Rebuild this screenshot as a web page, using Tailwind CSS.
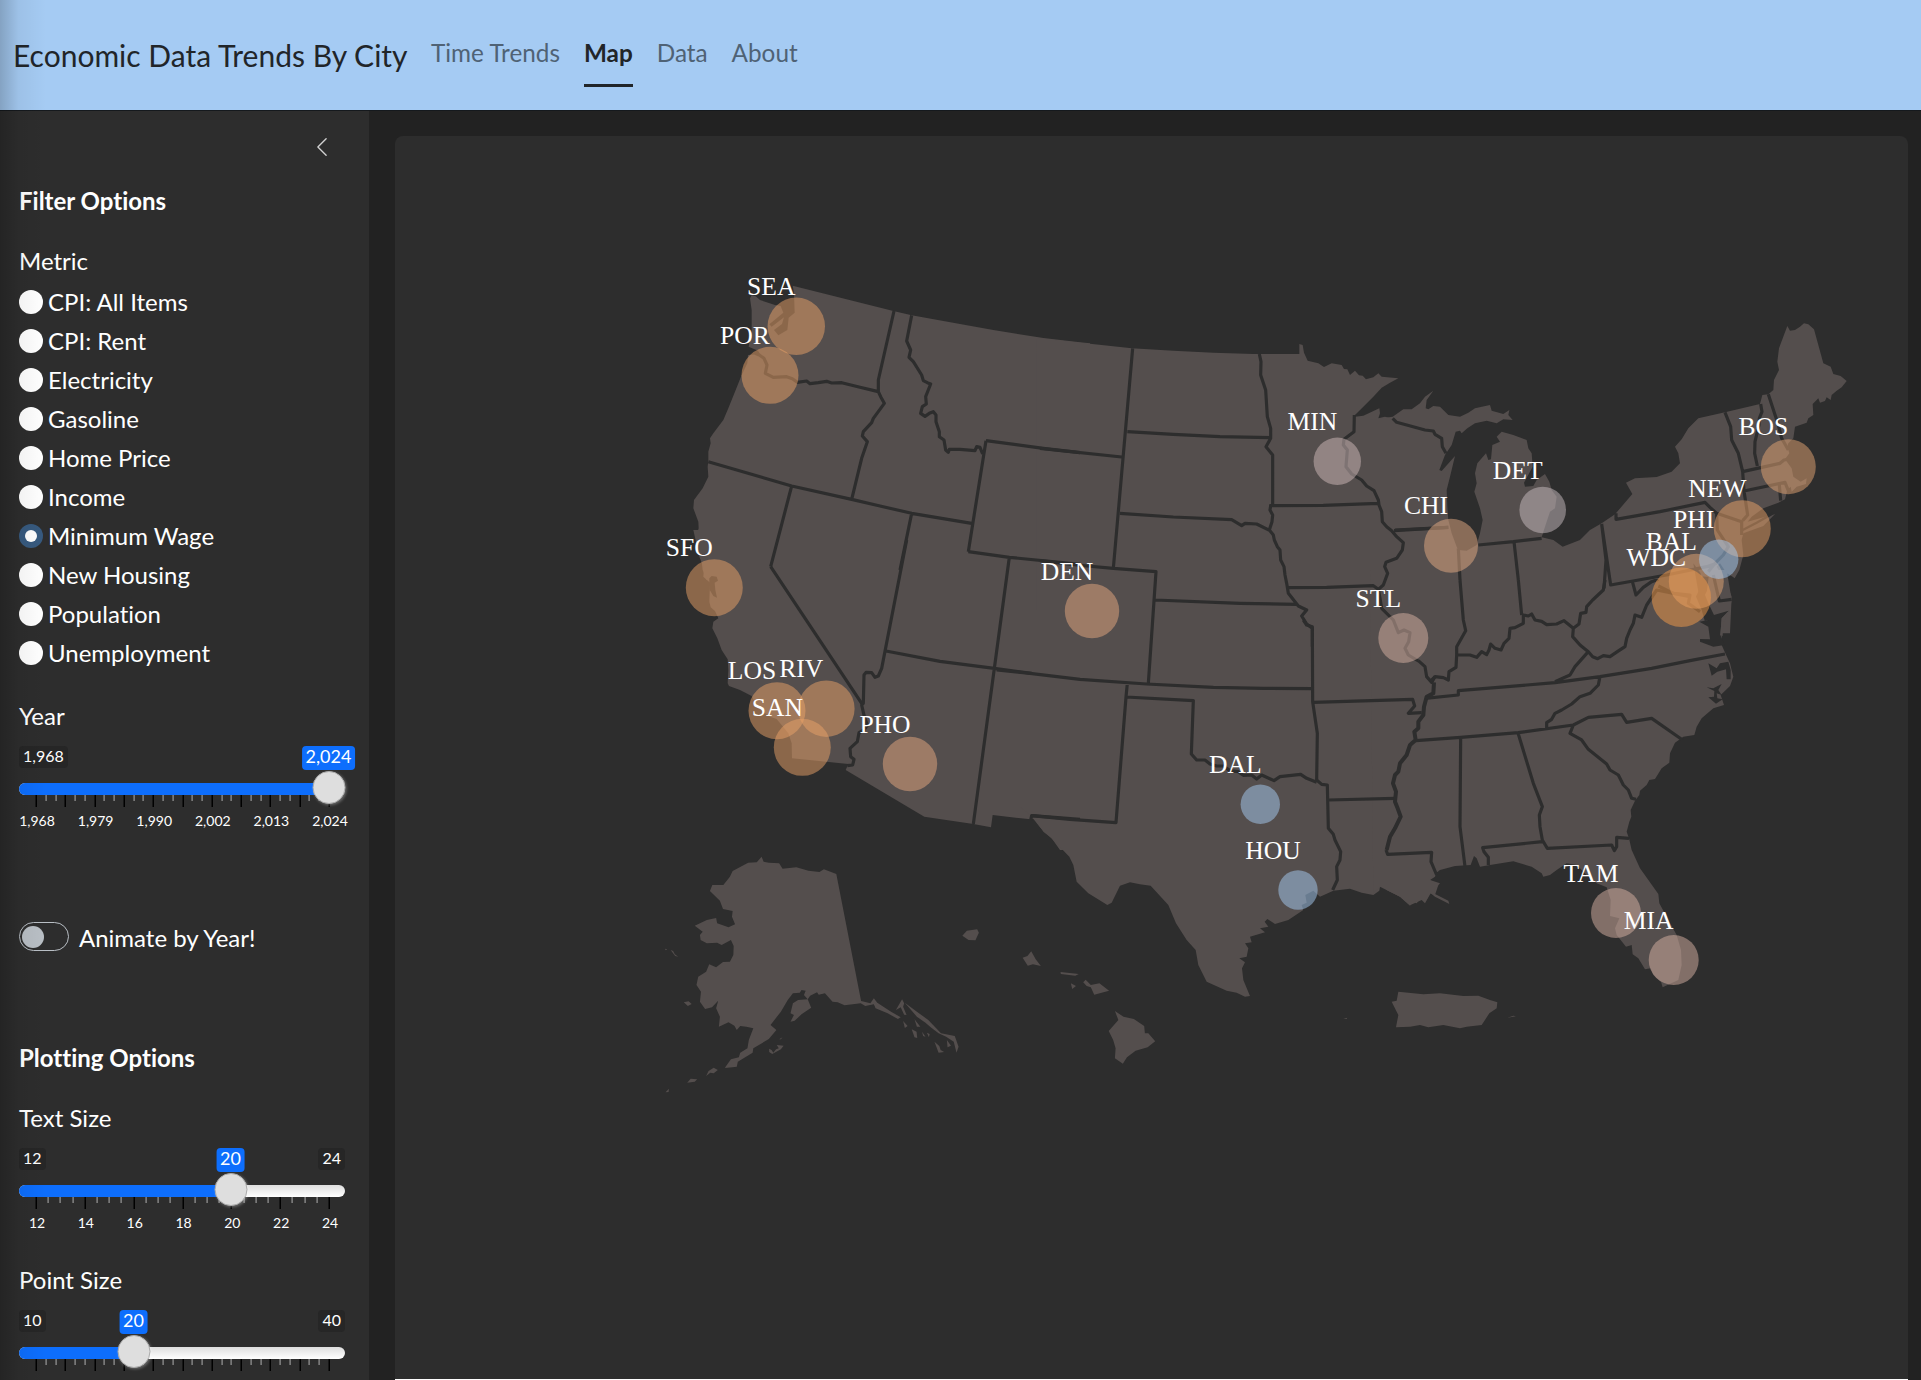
<!DOCTYPE html>
<html lang="en">
<head>
<meta charset="utf-8">
<title>Economic Data Trends By City</title>
<script src="https://cdn.jsdelivr.net/npm/@tailwindcss/browser@4"></script>
</head>
<body class="relative h-[1380px] w-[1921px] overflow-hidden bg-[#222222] font-['Lato',sans-serif] text-[24px] text-white [font-variant-ligatures:none]">
<div class="flex h-full flex-col">
<header class="flex h-[111px] shrink-0 items-center border-b border-[#15191d] bg-[#a5cbf3] pl-[13px] text-[#212529]">
  <div class="w-[418px] text-[30px] leading-[45px] whitespace-nowrap">Economic Data Trends By City</div>
  <nav class="flex gap-6 text-[24.3px] leading-9 text-[#4f6275]">
    <a class="h-[64px] pt-[12px]">Time Trends</a>
    <a class="h-[64px] border-b-[3px] border-[#212529] pt-[12px] font-bold text-[#212529]">Map</a>
    <a class="h-[64px] pt-[12px]">Data</a>
    <a class="h-[64px] pt-[12px]">About</a>
  </nav>
</header>
<div class="flex min-h-0 flex-1">
  <aside class="flex w-[369px] shrink-0 flex-col overflow-hidden bg-[#2d2d2d] pl-[19px]">
    <div class="flex h-[75px] shrink-0 justify-end pt-[25px] pr-[36px]">
      <svg class="size-[22px]" viewBox="0 0 16 16" fill="#d0d0d0"><path d="M11.354 1.646a.5.5 0 0 1 0 .708L5.707 8l5.647 5.646a.5.5 0 0 1-.708.708l-6-6a.5.5 0 0 1 0-.708l6-6a.5.5 0 0 1 .708 0z"/></svg>
    </div>
    <h2 class="h-[60px] shrink-0 leading-[30px] font-bold">Filter Options</h2>
    <div class="h-[36px] shrink-0 leading-[30px]">Metric</div>
    <div id="metrics" class="mb-[28px] flex shrink-0 flex-col"></div>
    <div class="h-[46px] shrink-0 leading-[32px]">Year</div>
    <div data-min="1,968" data-pos="309.5" data-val="2,024" data-n="30" data-big="3" data-labels="1,968|1,979|1,990|2,002|2,013|2,024" class="slider relative h-[176px] w-[326px] shrink-0"></div>
    <div class="flex h-[121px] shrink-0 items-start gap-[10px]">
      <span class="flex h-[29px] w-[50px] items-center rounded-full border border-[#b9bfc5] pl-[2px]"><span class="size-[22px] rounded-full bg-[#b9bfc5]"></span></span>
      <span class="leading-[32px]">Animate by Year!</span>
    </div>
    <h2 class="h-[61px] shrink-0 leading-[30px] font-bold">Plotting Options</h2>
    <div class="h-[44px] shrink-0 leading-[28px]">Text Size</div>
    <div data-min="12" data-max="24" data-pos="211.5" data-val="20" data-n="24" data-big="4" data-labels="12|14|16|18|20|22|24" class="slider relative h-[118px] w-[326px] shrink-0"></div>
    <div class="h-[44px] shrink-0 leading-[28px]">Point Size</div>
    <div data-min="10" data-max="40" data-pos="114.5" data-val="20" data-n="30" data-big="3" data-labels="" class="slider relative h-[64px] w-[326px] shrink-0"></div>
  </aside>
  <main class="flex flex-1 pt-[25px] pr-[13px] pl-[26px]">
    <section class="flex-1 overflow-hidden rounded-t-lg border-b border-white bg-[#2d2d2d]">
      <svg class="block h-[1243px] w-[1513px]" viewBox="395 136 1513 1243">
        <g fill="#544e4d">
          <path transform="translate(660 250) scale(.33333)" d="M398 107L700 183L755 196L900 222L1000 240L1150 264L1260 277L1290 280V990H140L128 960L125 935L112 890L108 862L116 835L115 815L100 775L102 750L128 715L145 680L143 650L145 632L145 605L152 580L150 565L160 550L190 510L205 475L225 425L245 375L262 340L264 315L300 312L294 302L266 290L275 240L275 180L270 145L275 136L287 139L300 150L345 165L362 168L370 188L328 223L335 230L372 202L366 222L342 240L355 256L382 240L386 203L404 188L402 130Z"/>
          <path transform="translate(660 540) scale(.33333)" d="M100 -30L118 50L132 85L130 110L150 128L148 185L152 202L165 213L175 235L160 245L157 265L172 295L185 330L203 358L205 390L203 430L207 438L240 450L275 468L290 500L330 530L350 537L385 580L395 610L396 655L565 672L557 690L793 830L940 852L993 862L998 825L1112 838L1122 835L1150 875L1175 895L1200 930H1290V-30Z"/>
          <path transform="translate(1040 320) scale(.33333)" d="M-10 54L275 85L400 92L520 98L640 102H778V72L788 75L792 98L803 122L835 130L852 141L875 130L905 135L912 147L922 148L930 165L945 152L957 166L968 167L978 178L1000 172L1015 160L1025 170L1075 175L1050 188L1025 203L1000 230L970 260L945 285V290L970 287L1018 265L1020 280L1015 295L1035 290L1060 297L1110 310L1150 340L1170 400V990H-10Z"/>
          <path transform="translate(1030 620) scale(.33333)" d="M-30 -30H1290V700L1240 740L1225 745L1215 770L1200 780L1225 795L1215 825L1200 820L1188 842L1170 838L1160 850L1148 845L1140 857L1110 830L1070 810L1062 800L1050 800L1048 812L1030 825L995 818L960 806L910 812L870 830L850 812L826 825L830 848L815 855L820 870L775 900L735 912L725 905L712 897L704 905L715 920L690 925L705 937L660 950L665 967L645 970L655 985L650 1010L628 1015L645 1027L636 1045L640 1080L660 1128L645 1130L620 1118L590 1112L530 1085L505 1035L497 990L470 960L438 910L415 855L362 797L330 793L300 787L270 797L245 848L232 855L175 820L140 785L130 735L118 710L75 665L30 622L5 590L-30 560Z"/>
          <path transform="translate(1380 300) scale(.33333)" d="M38 350L70 328L95 328L120 310L135 290L160 272L140 300L137 325L145 328L160 318L180 320L205 345L240 350L265 338L285 325L330 315L335 332L370 342L388 330L385 345L398 360L370 358L350 370L320 362L285 370L262 385L245 400L240 392L227 395L215 435L195 465L178 510L185 513L225 468L210 530L200 570L202 620L205 660L215 700L230 740L235 750L260 752L290 735L300 700L308 660L300 625L283 575L290 550L285 520L292 490L318 460L325 480L333 478L337 435L360 425L350 410L365 395L400 405L440 420L445 445L455 460L458 500L432 548L435 560L460 558L470 540L495 522L508 545L515 570L530 590L525 625L510 635L495 680L485 712L520 720L548 740L600 720L630 690L665 670L705 643L757 582L738 548L765 535L830 531L875 515L900 490L895 460L885 440L905 418L925 385L955 355L1035 337L1140 312L1147 285L1165 283L1180 270L1182 240L1197 210L1192 185L1197 145L1222 78L1230 92L1245 90L1260 80L1272 70L1285 73L1302 88L1330 190L1352 200L1360 222L1382 228L1400 243L1385 262L1370 272L1355 285L1352 300L1340 292L1335 303L1320 308L1315 295L1298 312L1300 345L1285 355L1280 368L1245 380L1240 415L1225 430L1222 440L1228 460L1215 478L1235 505L1240 530L1262 545L1280 535L1278 552L1250 560L1235 575L1232 560L1222 570L1215 598L1195 608L1150 625L1115 650L1103 665L1185 642L1150 678L1090 700L1085 720L1090 765L1078 810L1064 835L1058 830L1040 820L1020 790L1010 800L1040 850L1055 890L1050 1000H-30V360Z"/>
          <path transform="translate(1380 580) scale(.33333)" d="M-30 -30H1040L1055 60L1050 90L1035 110L1026 130L1025 195L1037 222L1050 250L1060 290L1050 318L1022 345L1032 375L1000 385L965 415L950 440L943 465L910 470L885 488L870 520L868 548L845 565L825 597L808 600L800 615L780 632L778 645L765 662L752 690L754 710L748 725L740 755L747 775L755 810L780 865L835 942L838 970L865 1020L890 1065L903 1110L905 1155L895 1200L848 1222L843 1205L820 1185L812 1165L795 1168L775 1135L758 1123L755 1095L738 1100L710 1065L705 1045L718 1015L690 1008L692 960L680 922L650 910L620 885L590 855L560 850L530 870L510 885L490 890L485 880L455 860L400 844L330 855L300 860L290 835L282 828L272 855L225 858L180 870L160 885L150 900L180 910L163 930L165 942L205 962L208 972L165 950L152 940L135 970L125 960L90 976L60 950L30 935L0 920L-20 940Z"/>
        </g>
        <g transform="translate(1380 580) scale(.33333)" fill="#2d2d2d">
          <path d="M940 -50L962 -20L965 20L985 70L1002 105L1020 100L1046 92L1025 115L1021 165L1034 195L1000 200L960 185L960 177L990 178L985 140L958 125L985 120L988 95L955 35Z"/>
          <path d="M985 250L1010 265L1020 250L1045 245L1052 270V298L1040 298L1038 268L1012 275L995 287ZM980 322L1000 325L1025 312L1015 330L1025 345L1010 340L1012 355L1028 358L1008 371L985 352L1002 350L1003 333Z"/>
        </g>
        <g fill="#544e4d" transform="translate(650 840) scale(.34438 .33333)">
          <path d="M324 50L330 65L345 68L375 70L385 86L425 82L460 92L492 96L505 88L541 102L613 483L640 490L650 475L660 488L700 515L728 532L720 537L690 520L655 505L650 493L625 498L612 490L565 496L545 487L530 485L508 460L490 464L485 457L465 467L458 478L468 503L440 523L420 542L408 545L418 525L408 520L415 490L430 480L458 478L447 465L452 452L440 450L435 458L415 460L400 480L380 515L350 555L367 570L345 597L300 625L298 638L255 665L252 680L217 684L235 658L258 652L262 638L283 625L287 600L300 565L280 560L262 558L252 570L245 557L228 547L200 560L203 530L192 505L198 482L180 502L160 507L145 485L148 455L135 435L140 410L163 395L172 373L192 382L212 366L232 365L242 345L243 318L235 300L208 315L195 308L165 310L147 300L145 285L153 275L130 257L165 240L192 234L195 250L228 262L247 253L238 230L240 213L212 207L203 182L174 153L181 135H213L232 110L240 93L285 68L310 67Z"/>
          <path d="M163 708L170 693L185 683L197 690L185 700L175 698ZM108 728L118 716L137 718L130 725ZM45 757L55 746L54 756ZM346 626L353 630L358 638L366 628L374 625L368 615L388 617L380 628L355 642L346 636ZM98 487L112 484L121 492L110 498ZM60 330L67 333L72 343L82 350L73 348ZM43 326L50 328L46 331ZM714 510L732 478L738 490L735 500L745 525L738 524L728 502ZM740 488L775 515L808 540L845 580L885 588L896 620L890 638L882 605L860 590L838 580L815 562L800 548L775 530ZM768 538L785 560L775 560ZM735 543L748 558L740 564ZM760 568L774 575L776 594L768 592ZM790 575L800 590L793 588ZM804 578L812 582L810 592ZM826 605L840 618L844 630L854 636L838 638ZM862 600L874 617L864 622ZM375 598L385 592L380 598Z"/>
          <path d="M907 287L920 272L950 268L955 278L945 301L925 300ZM1082 353L1096 348L1107 334L1120 358L1135 378L1112 373L1097 377ZM1192 396L1245 402L1235 407L1193 402ZM1222 430L1237 438L1226 447ZM1258 427L1265 419L1280 435L1305 430L1333 452L1290 464L1280 442L1268 438ZM1350 513L1375 530L1405 537L1435 558L1437 580L1447 580L1467 604L1445 622L1410 632L1385 652L1373 671L1350 655L1352 625L1345 600L1332 573L1360 540Z"/>
        </g>
        <g fill="#544e4d" transform="translate(1380 580) scale(.33333)">
          <path d="M55 1235L130 1243L180 1240L250 1248L295 1247L330 1260L352 1267L350 1285L328 1300L305 1335L260 1340L240 1345L190 1335L145 1342L120 1335L90 1340L48 1342L55 1305L35 1265L50 1262ZM383 1313L400 1307L408 1309ZM-110 1316L-98 1313L-100 1317Z"/>
          <path d="M1045 95L1030 130L1028 168L1021 165L1025 115Z"/>
        </g>
        <g fill="none" stroke="#2d2d2d" stroke-width="9.5" stroke-linejoin="round">
          <g transform="translate(660 250) scale(.33333)">
            <path d="M285 310L298 315L312 325L321 345L316 370L340 382L380 380L397 386L412 397L440 393L450 401L475 398L500 394L515 399L545 398L600 412L655 425M702 183L655 390V425L662 440L673 460L640 505L635 518L610 545L607 558L622 575L605 625L575 748M145 635L395 708L575 748L660 768L755 790L935 820M395 708L332 950M755 196L740 273L752 300L747 322L760 335L785 375L790 392L802 398L812 402L797 440L799 462L787 470L782 490L795 499L808 490L820 485L828 495L828 515L838 545L838 560L852 570L857 600L865 607L868 598L900 598L945 602L950 590L960 592L968 612M978 572L925 905M978 572L1150 595L1260 608M755 790L720 960"/>
          </g>
          <g transform="translate(660 540) scale(.33333)">
            <path d="M332 80L605 490M740 0L665 385L655 408L645 412L635 398L618 397L612 405L610 490L605 495L613 530L622 555L612 570L597 578L592 605L570 625L572 650L582 658L578 675L562 677M925 35L1048 52L1260 73M1048 52L940 852M678 333L840 364L1003 385L1115 400M1112 840L1115 827L1260 838"/>
          </g>
          <g transform="translate(1040 320) scale(.33333)">
            <path d="M278 85L220 745M262 335L400 343L540 350L690 353M0 385L245 411M0 722L110 735L220 745L348 755L325 1090M240 580L400 591L575 599L605 617L615 610L650 612L690 632M658 102L663 125L662 165L677 210L682 290L692 325V355L678 380L698 405V555M688 557L850 556L1015 550M692 557L690 570L698 585L696 605L688 630L700 645L703 660L712 680L720 690L722 720L732 740L735 765L740 790L745 820L765 845L775 858L800 870L785 888L800 912L817 925V980M745 803L860 802L1000 797L1015 808M345 840L600 850L770 853M943 285L942 335L912 358L910 375L922 390L918 440L935 462L965 480L980 498L1002 512L1015 540L1017 555L1025 575L1027 605L1040 620L1055 632L1070 650L1090 668L1087 690L1070 715L1038 727L1034 740L1043 760L1030 795L1015 808L1020 835L1025 865L1060 900L1075 938L1092 930L1110 938L1106 965L1095 985L1105 1005L1135 1023M1062 632L1225 622M1058 295L1070 307L1155 330L1180 333L1185 343L1205 355L1207 380L1218 400"/>
          </g>
          <g transform="translate(1030 620) scale(.33333)">
            <path d="M820 0L830 15L847 20L848 245L862 340L860 480L875 493L892 495L895 625L910 643L915 660L932 695L930 720L920 740L922 780L908 810M-100 150L0 160L150 178L350 192L550 202L700 205L848 206M292 190L288 231L258 608L120 598L5 587M288 231L490 242L484 402L500 420L525 420L540 432L560 438L580 438L600 452L625 455L640 466L665 465L680 477L695 465L732 482L750 470L812 463L830 475L860 487M850 247L1148 238L1154 258L1135 280L1175 278M895 540L1095 535M1165 122L1185 140L1190 170L1205 187L1215 170"/>
            <path stroke-width="12" d="M1212 187L1210 220L1190 230L1182 260L1180 285L1165 305L1165 325L1153 335L1157 360L1140 375L1130 405L1110 430L1105 455L1095 465L1089 490L1098 515L1095 545L1103 565L1112 590L1095 625L1080 650L1070 690"/>
            <path d="M1068 690L1073 703L1205 697L1203 725L1220 765"/>
          </g>
          <g transform="translate(1380 580) scale(.33333)">
            <path d="M150 305L165 290L190 293L205 300L207 275L228 262L230 225L250 225L270 225L290 232L305 215L320 224L327 210L332 192L345 205L363 210L372 190L387 175L390 145L405 143L430 130V105L445 108L455 102L465 120L485 124L500 134L530 132L552 122L580 145L597 132L602 100L618 97L620 80L638 60L670 30L675 0M240 0L250 120L257 152L230 200V225M415 0L425 105M580 145L578 170L600 195L625 215L585 260L570 285L525 305M135 355L235 345V332L525 308L660 290L815 265L930 242L1035 222M660 290L655 315L630 340L600 350L575 372L545 390L525 400L515 418L500 428V445M108 482L242 472L415 458L580 435L625 412L725 403L740 427L815 415L908 480M242 475L240 740L255 860M415 462L460 610L487 680L478 705L480 740L487 780L502 805L695 795L703 812L710 800V772L747 775M487 785L308 803L312 815L325 832V855M580 435L570 460L605 480L625 508L680 552L690 570L715 585L730 615L745 630L755 655L768 658M625 215L638 230L653 236L670 227L690 230L712 215L735 200L740 175L750 150L760 130L765 105L785 112L800 75L830 30L930 50"/>
          </g>
          <g transform="translate(1380 300) scale(.33333)">
            <path d="M665 672L678 780L672 865M665 672L692 855L860 825L980 800L1010 790M708 640V658L840 635L975 607L990 622L1010 640L1085 665V705M1035 337L1052 380L1055 420L1075 460L1088 515L1092 573L1103 645L1088 662M1142 312L1146 335L1138 355L1137 375L1125 425L1124 460L1132 498M1165 283L1195 375L1205 415L1225 450M1088 515L1200 490L1212 480L1227 477M1092 573L1215 547L1225 572M1198 555L1202 602M295 735L400 725L485 715M235 745L240 840M402 725L415 840M45 690L205 682M1000 825L1018 903L1055 898M758 848L768 885L790 862L815 845L835 838M1010 640L1012 690L1045 740L1030 765L1005 790L985 815M835 858L880 880L930 885L925 910L960 935"/>
          </g>
        </g>
        <g stroke="#2d2d2d" fill="none" transform="translate(1380 300) scale(.33333)">
          <path stroke-width="22" d="M975 830L970 870L960 890L975 925L985 960"/>
          <path stroke-width="7" d="M1088 690L1130 668L1180 640"/>
        </g>
        <g transform="translate(660 540) scale(.33333)" fill="#2d2d2d"><path d="M148 115L155 108L170 110L174 122L164 128L166 150L171 173L160 168L148 148Z"/></g>
        <g id="points" fill-opacity=".5"></g>
        <g id="labels" fill="#fff" font-family="Liberation Serif, serif" font-size="25.6" text-anchor="middle"></g>
      </svg>
    </section>
  </main>
</div>
</div>
<div class="pointer-events-none absolute inset-y-0 left-0 w-[46px] bg-linear-to-r from-black/20 via-black/5 via-40% to-transparent"></div>
<script>
const metrics = ['CPI: All Items','CPI: Rent','Electricity','Gasoline','Home Price','Income','Minimum Wage','New Housing','Population','Unemployment'];
document.getElementById('metrics').innerHTML = metrics.map(m => `
  <label class="flex h-[39px] items-center gap-[5px]"><span class="flex size-[24px] items-center justify-center rounded-full ${m === 'Minimum Wage' ? 'bg-[#375a7f]' : 'bg-white'}"><span class="size-[12px] rounded-full bg-white"></span></span><span>${m}</span></label>`).join('');

document.querySelectorAll('.slider').forEach(el => {
  const d = el.dataset, n = +d.n, big = +d.big, labels = d.labels ? d.labels.split('|') : [];
  let ticks = '';
  for (let i = 0; i <= n; i++) {
    const x = Math.round(17 + i * 293 / n), b = i % big === 0;
    ticks += `<rect x="${x - .5}" y="0" width="${b ? 1.5 : 1.2}" height="${b ? 12 : 6}" fill="${b ? '#000' : '#999'}"/>`;
  }
  el.innerHTML = `
    <span class="absolute top-0 left-0 h-[22px] rounded bg-[#262626] px-[4px] text-[16px] leading-[20px]">${d.min}</span>
    ${d.max ? `<span class="absolute top-0 right-0 h-[22px] rounded bg-[#262626] px-[4px] text-[16px] leading-[20px]">${d.max}</span>` : ''}
    <div class="absolute top-[37px] left-0 h-[12px] w-full overflow-hidden rounded-full bg-linear-to-b from-[#dedede] to-white"><div class="h-full bg-[#0d6efd]" style="width:${d.pos}px"></div></div>
    <svg class="absolute top-[49px] left-0 h-[12px] w-[326px]">${ticks}</svg>
    ${labels.map((t, i) => `<span class="absolute top-[65px] -translate-x-1/2 text-[14px] leading-[20px]" style="left:${18 + i * 293 / (labels.length - 1)}px">${t}</span>`).join('')}
    <span class="absolute top-[25px] size-[33px] -translate-x-1/2 rounded-full border border-[#ababab] bg-[#dedede] shadow-[1px_1px_3px_rgba(255,255,255,0.3)]" style="left:${d.pos}px"></span>
    <span class="absolute top-0 h-[24px] -translate-x-1/2 rounded bg-[#0d6efd] px-[4px] text-[18px] leading-[21px]" style="left:${d.pos}px">${d.val}</span>`;
});

const cities = [
  ['SEA',796.3,326.3,28.7,'#eaa267'],['POR',770,375.3,28.5,'#eaa267'],['SFO',714.3,587.7,28.5,'#eaa267'],
  ['LOS',777,710.7,28.5,'#eaa267'],['RIV',826.3,708.7,28.3,'#eaa267'],['SAN',802.3,747.3,28.5,'#eaa267'],
  ['PHO',910,764,27.2,'#e6a87f'],['DEN',1092,611,27.2,'#e6a87f'],['MIN',1337.3,461.3,23.7,'#d0bab9'],
  ['CHI',1451,545.7,27,'#e6ab84'],['DET',1542.7,510,23.3,'#cabec1'],['BOS',1788.3,466.7,27.5,'#e5a673'],
  ['NEW',1742.3,528.7,28.5,'#eaa267'],['BAL',1696.3,581.3,27.5,'#e5a673'],['PHI',1718.7,559.3,19.7,'#a5cbf3'],
  ['WDC',1681.3,597.3,29.7,'#f59b4a'],['STL',1403.3,638,25,'#d8b2a3'],['DAL',1260.3,804.3,19.7,'#a5cbf3'],
  ['HOU',1298,890,19.7,'#a5cbf3'],['TAM',1616,913,25,'#d8b2a3'],['MIA',1673.7,960,25,'#d8b2a3']
];
document.getElementById('points').innerHTML = cities.map(c => `<circle cx="${c[1]}" cy="${c[2]}" r="${c[3]}" fill="${c[4]}"/>`).join('');
document.getElementById('labels').innerHTML = cities.map(c => `<text x="${c[1] - 25}" y="${c[2] - 31.3}">${c[0]}</text>`).join('');
</script>
</body>
</html>
